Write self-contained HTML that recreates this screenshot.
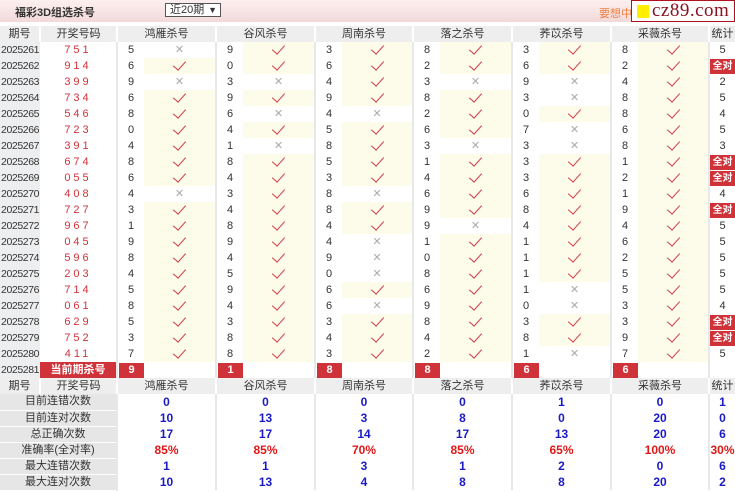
<!DOCTYPE html>
<html><head><meta charset="utf-8"><style>
*{margin:0;padding:0;box-sizing:border-box}
body{width:735px;height:488px;overflow:hidden;background:#fff;font-family:"Liberation Sans","Noto Sans CJK SC",sans-serif;font-size:11px;color:#333}
.top{height:22px;background:linear-gradient(#fdf0f0,#f3d9d9);position:relative}
.title{position:absolute;left:15px;top:4px;font-weight:bold;font-size:11px;color:#333}
.sel{position:absolute;left:165px;top:3px;width:56px;height:14px;border:1px solid #555;background:#fff;font-size:11px;line-height:12px;padding-left:4px}
.sel b{position:absolute;right:3px;top:0;font-size:9px}
.want{position:absolute;left:599px;top:5px;color:#f08040;font-size:11px}
.logo{position:absolute;left:631px;top:0;width:104px;height:22px;border:1px solid #b01020;background:#fff}
.logo i{position:absolute;left:5px;top:4px;width:12px;height:13px;background:#ffee00}
.logo span{position:absolute;left:20px;top:-1px;font-family:"Liberation Serif",serif;font-size:19px;color:#8a1020;letter-spacing:.5px}
table{position:absolute;left:0;top:26px;border-collapse:collapse;table-layout:fixed;width:735px}
td{height:16px;padding:0;text-align:center;white-space:nowrap;overflow:hidden;line-height:15px}
tr.h td{background:#eeeeee;color:#333;border-left:2px solid #fff}
td.q{background:#eceef0;text-align:left;padding-left:1px;font-size:10.5px;letter-spacing:-0.4px}
td.k{color:#d0323a;letter-spacing:3px}
td.n{text-align:left;padding-left:10px;border-left:2px solid #e8e8e8}
td.y{background:#fdfbea}
td.y::after{content:"";display:inline-block;width:6px;height:11px;border-right:1.6px solid #d43a44;border-bottom:1.6px solid #d43a44;transform:rotate(42deg);margin-top:-4px;vertical-align:middle}
td.x::after{content:"✕";color:#aaa;font-size:11px}
td.t{border-left:2px solid #e8e8e8}
td.t b{display:block;background:#d0323a;color:#fff;font-size:10px;height:15px}
td.cur{background:#d0323a;color:#fff;font-weight:bold}
td.r{padding:0 0 0 1px;border-left:2px solid #e8e8e8}
td.r b{display:block;width:25px;background:#d0323a;color:#fff}
tr.s td{font-weight:bold;color:#1a1ac8;font-size:12px;border-left:2px solid #e8e8e8}
tr.s td.l{background:#e6e6e6;color:#333;font-weight:normal;font-size:11px;border-left:0;border-bottom:1px solid #fff}
tr.s td.p{color:#e01818}
</style></head><body>
<div class="top"><div class="title">福彩3D组选杀号</div><div class="sel">近20期<b>▼</b></div><div class="want">要想中</div><div class="logo"><i></i><span>cz89.com</span></div></div>
<table>
<colgroup><col style="width:40px"><col style="width:77px"><col style="width:27px"><col style="width:72px"><col style="width:27px"><col style="width:72px"><col style="width:27px"><col style="width:71px"><col style="width:27px"><col style="width:72px"><col style="width:27px"><col style="width:72px"><col style="width:27px"><col style="width:71px"><col style="width:26px"></colgroup>
<tr class="h"><td style="border-left:0">期号</td><td>开奖号码</td><td colspan="2">鸿雁杀号</td><td colspan="2">谷风杀号</td><td colspan="2">周南杀号</td><td colspan="2">落之杀号</td><td colspan="2">荞苡杀号</td><td colspan="2">采薇杀号</td><td>统计</td></tr>
<tr><td class="q">2025261</td><td class="k">751</td><td class="n">5</td><td class="x"></td><td class="n">9</td><td class="y"></td><td class="n">3</td><td class="y"></td><td class="n">8</td><td class="y"></td><td class="n">3</td><td class="y"></td><td class="n">8</td><td class="y"></td><td class="t">5</td></tr>
<tr><td class="q">2025262</td><td class="k">914</td><td class="n">6</td><td class="y"></td><td class="n">0</td><td class="y"></td><td class="n">6</td><td class="y"></td><td class="n">2</td><td class="y"></td><td class="n">6</td><td class="y"></td><td class="n">2</td><td class="y"></td><td class="t"><b>全对</b></td></tr>
<tr><td class="q">2025263</td><td class="k">399</td><td class="n">9</td><td class="x"></td><td class="n">3</td><td class="x"></td><td class="n">4</td><td class="y"></td><td class="n">3</td><td class="x"></td><td class="n">9</td><td class="x"></td><td class="n">4</td><td class="y"></td><td class="t">2</td></tr>
<tr><td class="q">2025264</td><td class="k">734</td><td class="n">6</td><td class="y"></td><td class="n">9</td><td class="y"></td><td class="n">9</td><td class="y"></td><td class="n">8</td><td class="y"></td><td class="n">3</td><td class="x"></td><td class="n">8</td><td class="y"></td><td class="t">5</td></tr>
<tr><td class="q">2025265</td><td class="k">546</td><td class="n">8</td><td class="y"></td><td class="n">6</td><td class="x"></td><td class="n">4</td><td class="x"></td><td class="n">2</td><td class="y"></td><td class="n">0</td><td class="y"></td><td class="n">8</td><td class="y"></td><td class="t">4</td></tr>
<tr><td class="q">2025266</td><td class="k">723</td><td class="n">0</td><td class="y"></td><td class="n">4</td><td class="y"></td><td class="n">5</td><td class="y"></td><td class="n">6</td><td class="y"></td><td class="n">7</td><td class="x"></td><td class="n">6</td><td class="y"></td><td class="t">5</td></tr>
<tr><td class="q">2025267</td><td class="k">391</td><td class="n">4</td><td class="y"></td><td class="n">1</td><td class="x"></td><td class="n">8</td><td class="y"></td><td class="n">3</td><td class="x"></td><td class="n">3</td><td class="x"></td><td class="n">8</td><td class="y"></td><td class="t">3</td></tr>
<tr><td class="q">2025268</td><td class="k">674</td><td class="n">8</td><td class="y"></td><td class="n">8</td><td class="y"></td><td class="n">5</td><td class="y"></td><td class="n">1</td><td class="y"></td><td class="n">3</td><td class="y"></td><td class="n">1</td><td class="y"></td><td class="t"><b>全对</b></td></tr>
<tr><td class="q">2025269</td><td class="k">055</td><td class="n">6</td><td class="y"></td><td class="n">4</td><td class="y"></td><td class="n">3</td><td class="y"></td><td class="n">4</td><td class="y"></td><td class="n">3</td><td class="y"></td><td class="n">2</td><td class="y"></td><td class="t"><b>全对</b></td></tr>
<tr><td class="q">2025270</td><td class="k">408</td><td class="n">4</td><td class="x"></td><td class="n">3</td><td class="y"></td><td class="n">8</td><td class="x"></td><td class="n">6</td><td class="y"></td><td class="n">6</td><td class="y"></td><td class="n">1</td><td class="y"></td><td class="t">4</td></tr>
<tr><td class="q">2025271</td><td class="k">727</td><td class="n">3</td><td class="y"></td><td class="n">4</td><td class="y"></td><td class="n">8</td><td class="y"></td><td class="n">9</td><td class="y"></td><td class="n">8</td><td class="y"></td><td class="n">9</td><td class="y"></td><td class="t"><b>全对</b></td></tr>
<tr><td class="q">2025272</td><td class="k">967</td><td class="n">1</td><td class="y"></td><td class="n">8</td><td class="y"></td><td class="n">4</td><td class="y"></td><td class="n">9</td><td class="x"></td><td class="n">4</td><td class="y"></td><td class="n">4</td><td class="y"></td><td class="t">5</td></tr>
<tr><td class="q">2025273</td><td class="k">045</td><td class="n">9</td><td class="y"></td><td class="n">9</td><td class="y"></td><td class="n">4</td><td class="x"></td><td class="n">1</td><td class="y"></td><td class="n">1</td><td class="y"></td><td class="n">6</td><td class="y"></td><td class="t">5</td></tr>
<tr><td class="q">2025274</td><td class="k">596</td><td class="n">8</td><td class="y"></td><td class="n">4</td><td class="y"></td><td class="n">9</td><td class="x"></td><td class="n">0</td><td class="y"></td><td class="n">1</td><td class="y"></td><td class="n">2</td><td class="y"></td><td class="t">5</td></tr>
<tr><td class="q">2025275</td><td class="k">203</td><td class="n">4</td><td class="y"></td><td class="n">5</td><td class="y"></td><td class="n">0</td><td class="x"></td><td class="n">8</td><td class="y"></td><td class="n">1</td><td class="y"></td><td class="n">5</td><td class="y"></td><td class="t">5</td></tr>
<tr><td class="q">2025276</td><td class="k">714</td><td class="n">5</td><td class="y"></td><td class="n">9</td><td class="y"></td><td class="n">6</td><td class="y"></td><td class="n">6</td><td class="y"></td><td class="n">1</td><td class="x"></td><td class="n">5</td><td class="y"></td><td class="t">5</td></tr>
<tr><td class="q">2025277</td><td class="k">061</td><td class="n">8</td><td class="y"></td><td class="n">4</td><td class="y"></td><td class="n">6</td><td class="x"></td><td class="n">9</td><td class="y"></td><td class="n">0</td><td class="x"></td><td class="n">3</td><td class="y"></td><td class="t">4</td></tr>
<tr><td class="q">2025278</td><td class="k">629</td><td class="n">5</td><td class="y"></td><td class="n">3</td><td class="y"></td><td class="n">3</td><td class="y"></td><td class="n">8</td><td class="y"></td><td class="n">3</td><td class="y"></td><td class="n">3</td><td class="y"></td><td class="t"><b>全对</b></td></tr>
<tr><td class="q">2025279</td><td class="k">752</td><td class="n">3</td><td class="y"></td><td class="n">8</td><td class="y"></td><td class="n">4</td><td class="y"></td><td class="n">4</td><td class="y"></td><td class="n">8</td><td class="y"></td><td class="n">9</td><td class="y"></td><td class="t"><b>全对</b></td></tr>
<tr><td class="q">2025280</td><td class="k">411</td><td class="n">7</td><td class="y"></td><td class="n">8</td><td class="y"></td><td class="n">3</td><td class="y"></td><td class="n">2</td><td class="y"></td><td class="n">1</td><td class="x"></td><td class="n">7</td><td class="y"></td><td class="t">5</td></tr>
<tr><td class="q">2025281</td><td class="cur">当前期杀号</td><td class="r"><b>9</b></td><td></td><td class="r"><b>1</b></td><td></td><td class="r"><b>8</b></td><td></td><td class="r"><b>8</b></td><td></td><td class="r"><b>6</b></td><td></td><td class="r"><b>6</b></td><td></td><td class="t"></td></tr>
<tr class="h"><td style="border-left:0">期号</td><td>开奖号码</td><td colspan="2">鸿雁杀号</td><td colspan="2">谷风杀号</td><td colspan="2">周南杀号</td><td colspan="2">落之杀号</td><td colspan="2">荞苡杀号</td><td colspan="2">采薇杀号</td><td>统计</td></tr>
<tr class="s"><td class="l" colspan="2">目前连错次数</td><td colspan="2">0</td><td colspan="2">0</td><td colspan="2">0</td><td colspan="2">0</td><td colspan="2">1</td><td colspan="2">0</td><td>1</td></tr>
<tr class="s"><td class="l" colspan="2">目前连对次数</td><td colspan="2">10</td><td colspan="2">13</td><td colspan="2">3</td><td colspan="2">8</td><td colspan="2">0</td><td colspan="2">20</td><td>0</td></tr>
<tr class="s"><td class="l" colspan="2">总正确次数</td><td colspan="2">17</td><td colspan="2">17</td><td colspan="2">14</td><td colspan="2">17</td><td colspan="2">13</td><td colspan="2">20</td><td>6</td></tr>
<tr class="s"><td class="l" colspan="2">准确率(全对率)</td><td class="p" colspan="2">85%</td><td class="p" colspan="2">85%</td><td class="p" colspan="2">70%</td><td class="p" colspan="2">85%</td><td class="p" colspan="2">65%</td><td class="p" colspan="2">100%</td><td class="p">30%</td></tr>
<tr class="s"><td class="l" colspan="2">最大连错次数</td><td colspan="2">1</td><td colspan="2">1</td><td colspan="2">3</td><td colspan="2">1</td><td colspan="2">2</td><td colspan="2">0</td><td>6</td></tr>
<tr class="s"><td class="l" colspan="2">最大连对次数</td><td colspan="2">10</td><td colspan="2">13</td><td colspan="2">4</td><td colspan="2">8</td><td colspan="2">8</td><td colspan="2">20</td><td>2</td></tr>
</table>
</body></html>
